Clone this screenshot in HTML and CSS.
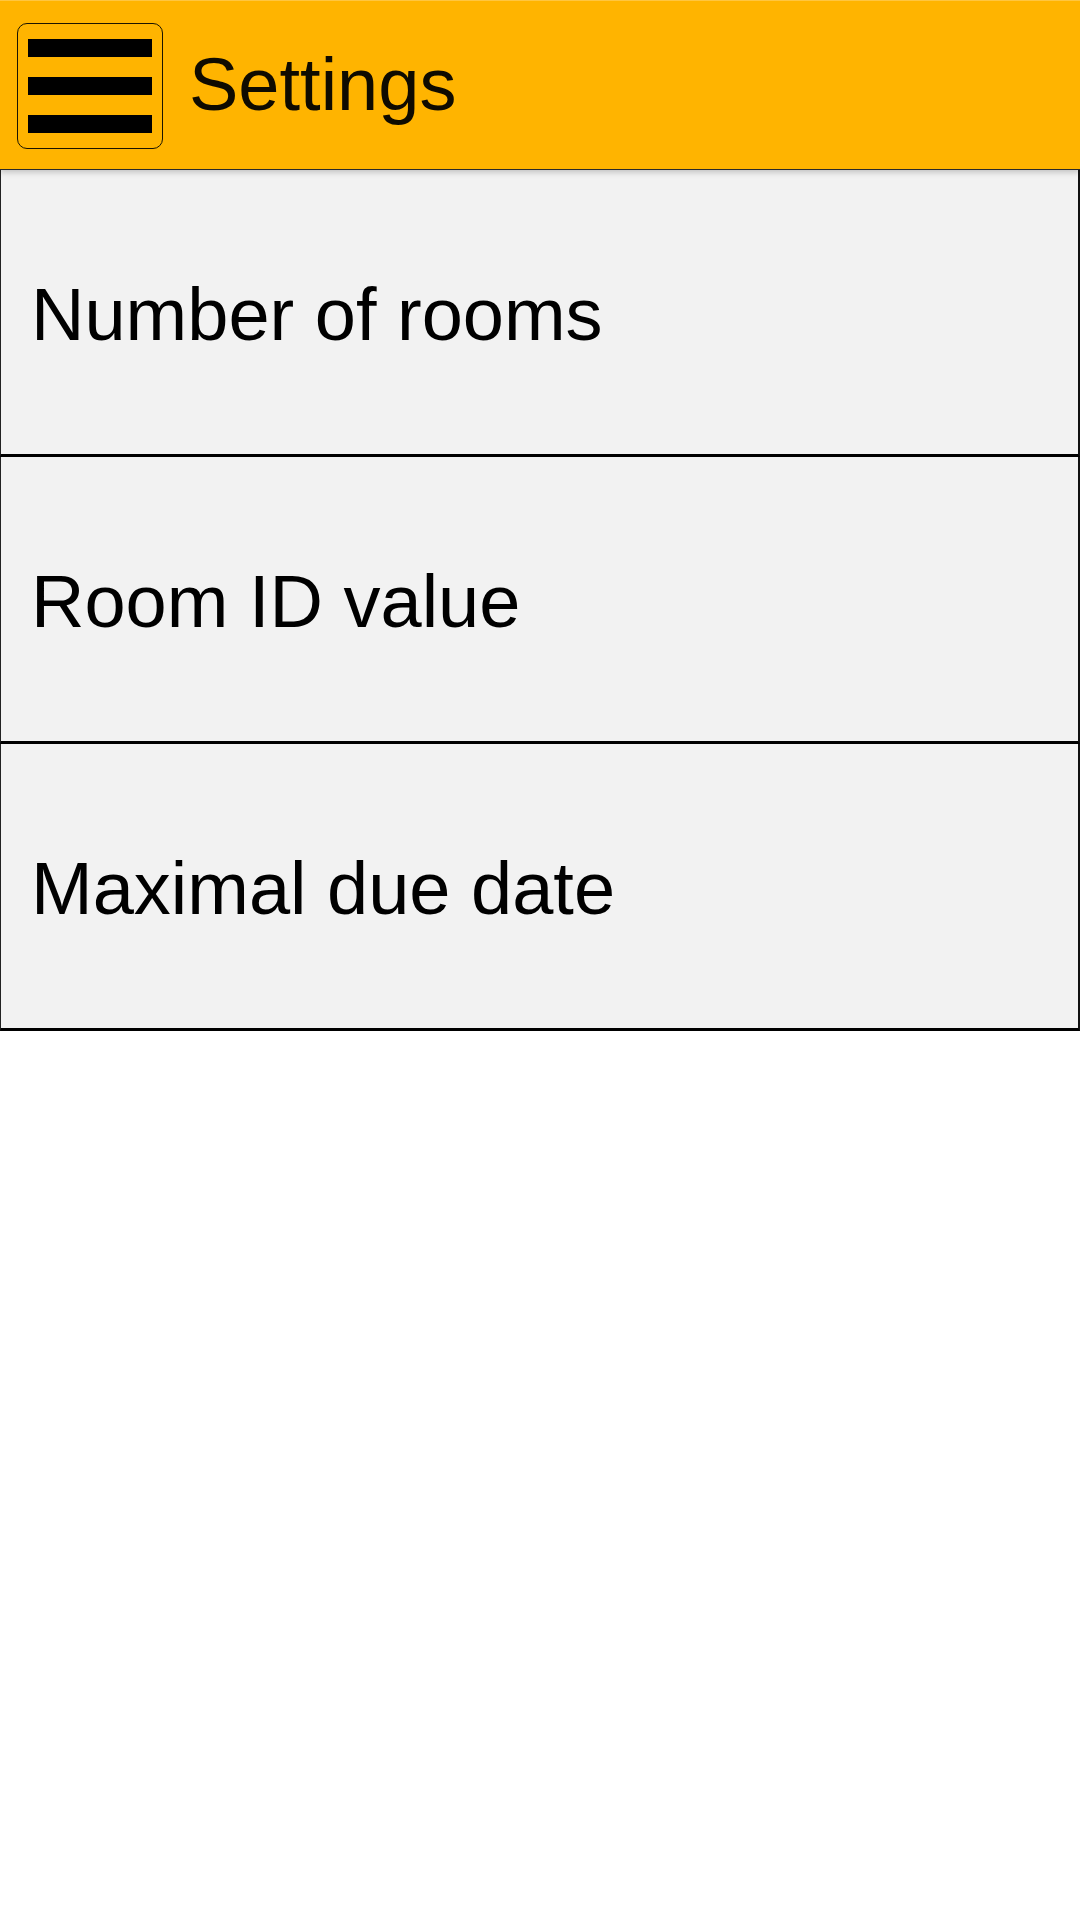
FILE: index.html
```html
<!DOCTYPE html>
<html lang="en">
<head>
<meta charset="utf-8">
<title>Settings</title>
<link rel="stylesheet" href="styles.css">
</head>
<body>
<header class="appbar">
  <button class="menu-btn" aria-label="Menu">
    <span class="bar"></span>
    <span class="bar"></span>
    <span class="bar"></span>
  </button>
  <h1 class="title">Settings</h1>
</header>
<main class="list">
  <div class="row">Number of rooms</div>
  <div class="row">Room ID value</div>
  <div class="row">Maximal due date</div>
</main>
</body>
</html>
```

FILE: styles.css
```css
html, body {
  margin: 0;
  padding: 0;
  background: #ffffff;
}
body {
  width: 1080px;
  font-family: "Liberation Sans", Arial, sans-serif;
  color: #000;
}
.appbar {
  position: relative;
  z-index: 2;
  box-sizing: border-box;
  height: 170px;
  background: #FFB400;
  border-top: 1px solid #ffc640;
  border-bottom: 1px solid #2a2a2a;
  box-shadow: 0 2px 6px rgba(0,0,0,0.22);
  display: flex;
  align-items: center;
  padding-left: 17px;
  gap: 26px;
}
.menu-btn {
  box-sizing: border-box;
  flex: 0 0 auto;
  width: 146px;
  height: 126px;
  margin-top: 1px;
  border: 1.5px solid #1a1400;
  border-radius: 10px;
  background: transparent;
  padding: 0;
  display: flex;
  flex-direction: column;
  align-items: center;
  justify-content: center;
  gap: 20px;
}
.bar {
  display: block;
  width: 124px;
  height: 18px;
  background: #000;
}
.title {
  margin: 0;
  font-weight: normal;
  font-size: 74px;
  line-height: 1;
  color: #0f0b00;
}
.list {
  display: flex;
  flex-direction: column;
}
.row {
  box-sizing: border-box;
  height: 287px;
  background: #F2F2F2;
  border-left: 1.5px solid #222;
  border-right: 2px solid #111;
  border-bottom: 3px solid #000;
  display: flex;
  align-items: center;
  padding-left: 30px;
  padding-top: 6px;
  font-size: 74px;
  line-height: 1;
}
```
